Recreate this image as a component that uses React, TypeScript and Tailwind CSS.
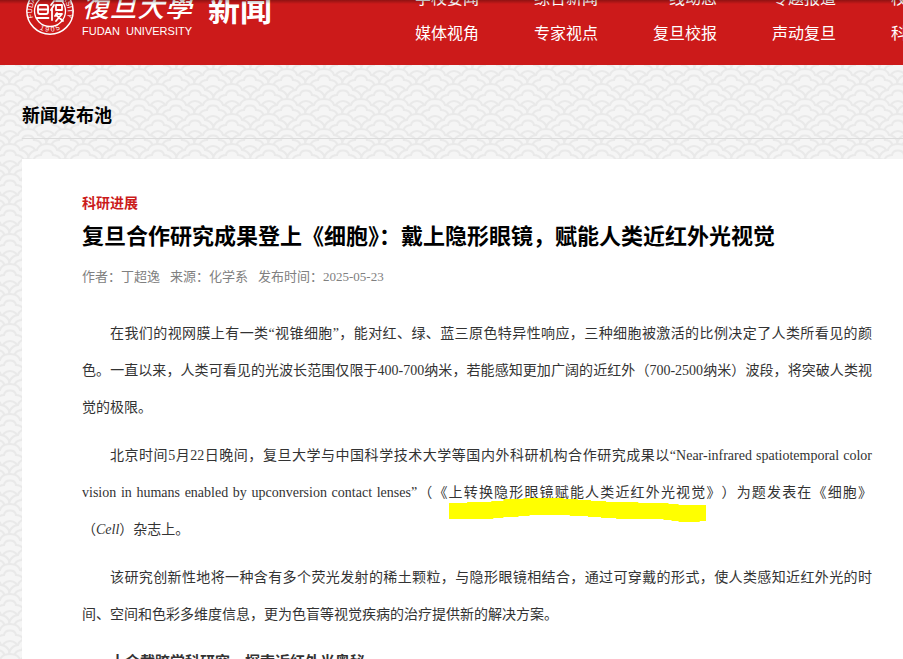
const navRows = [
  ["学校要闻", "综合新闻", "一线动态", "专题报道", "校园生活"],
  ["媒体视角", "专家视点", "复旦校报", "声动复旦", "科研进展"],
];

const meta = ["作者：丁超逸", "来源：化学系", "发布时间：2025-05-23"];

function Cloud({ x, y }: { x: number; y: number }) {
  return (
    <g transform={`translate(${x} ${y})`} fill="#f5f5f5" stroke="#e9e9e9" strokeWidth="2">
      <path d="M-19 20C-21 9 -17 3 -10 2C-8 -6 8 -6 10 2C17 3 21 9 19 20z" />
      <path d="M-14 20C-15 11 -12 7 -6 7C-5 1 5 1 6 7C12 7 15 11 14 20z" />
      <path d="M-8 22C-9 10 9 10 8 22z" />
    </g>
  );
}

function WavePattern() {
  // rows run top to bottom so that each one covers the foot of the row above
  const rows = [-1, 0, 1, 2].map((row) =>
    (row % 2 ? [0, 37] : [-18, 19, 56]).map((x) => <Cloud key={`${row}${x}`} x={x} y={row * 15} />)
  );
  return (
    <svg className="absolute inset-0 h-full w-full" aria-hidden="true">
      <defs>
        <pattern id="waves" x="28" y="-7" width="37" height="30" patternUnits="userSpaceOnUse">
          <rect width="37" height="30" fill="#f5f5f5" />
          {rows}
        </pattern>
      </defs>
      <rect width="100%" height="100%" fill="url(#waves)" />
    </svg>
  );
}

function Seal() {
  return (
    <svg className="h-12 w-12 shrink-0" viewBox="0 0 48 48" fill="none" stroke="#fff" aria-hidden="true">
      <defs>
        <path id="ringTop" d="M8 33A18 18 0 1 1 40 33" />
        <path id="ringBottom" d="M6 35A21.5 21.5 0 0 0 42 35" />
      </defs>
      <circle cx="24" cy="24" r="23.2" strokeWidth="1.5" />
      <circle cx="24" cy="24" r="15.5" strokeWidth="1.3" />
      <g fill="#fff" stroke="none" fontFamily="Liberation Sans, sans-serif" fontSize="7">
        <text>
          <textPath href="#ringTop" startOffset="50%" textAnchor="middle">FUDAN UNIVERSITY</textPath>
        </text>
        <text>
          <textPath href="#ringBottom" startOffset="50%" textAnchor="middle">1 9 0 5</textPath>
        </text>
      </g>
      <g strokeWidth="1.8" strokeLinecap="round" strokeLinejoin="round">
        <rect x="12" y="18" width="10" height="9" rx="2" />
        <path d="M12 22.5h10M10.5 31h12" />
        <path d="M28 14l-3 4M28 18l-3 5M26 22v11M30 14h7M30 18h6v5h-6zM31 26l-2 3M30 27h6l-6 7M30 28l7 6" />
      </g>
    </svg>
  );
}

function Header() {
  return (
    <header className="relative flex h-[65px] shrink-0 items-start overflow-hidden bg-[#cc1a1a] pl-[26px] text-white">
      <a href="#" className="-mt-[13px] flex shrink-0">
        <Seal />
        <span className="ml-2 flex w-[110px] flex-col">
          <span className="flex justify-between font-['Noto_Sans_CJK_TC',sans-serif] text-[27px] leading-[38px] font-medium italic">
            <span>復</span>
            <span>旦</span>
            <span>大</span>
            <span>學</span>
          </span>
          <span className="flex justify-between font-['Liberation_Sans',sans-serif] text-[11px] leading-3">
            <span>FUDAN</span>
            <span>UNIVERSITY</span>
          </span>
        </span>
        <span className="ml-4 text-[32px] leading-10 font-bold">新闻</span>
      </a>
      <nav className="-mt-5 ml-[143px] shrink-0">
        {navRows.map((row, i) => (
          <ul key={i} className="flex gap-[55px]">
            {row.map((item) => (
              <li key={item}>
                <a href="#" className="block text-base leading-[35px]">{item}</a>
              </li>
            ))}
          </ul>
        ))}
      </nav>
      <div className="absolute inset-x-0 top-0 h-1 bg-linear-to-b from-black/30 to-transparent" />
    </header>
  );
}

function Marker({ children }: { children: string }) {
  return (
    <span className="relative">
      {children}
      <svg
        className="absolute top-[13px] left-0 h-6 w-full"
        viewBox="0 0 256 24"
        preserveAspectRatio="none"
        aria-hidden="true"
      >
        <path
          fill="#ffff00"
          d="M0 5h18V4h24V3h12V1h20V0h40v1h14v1h13v1h15v1h32v1h30v1h10v1h28v16h-7v1h-21v-1h-7v-1h-8v-1h-47v-1h-15v-1h-13v-1h-18v-1H80v1H69v1H54v1H44v1H0z"
        />
      </svg>
    </span>
  );
}

export default function App() {
  return (
    <div
      lang="zh-CN"
      className="flex h-screen flex-col overflow-hidden bg-[#f5f5f5] font-['Noto_Sans_CJK_SC',sans-serif]"
    >
      <Header />
      <div className="relative flex-1 pl-[22px]">
        <WavePattern />
        <main className="relative">
          <h2 className="mb-5 border-b border-[#dcdcdc] pt-[31px] pb-1.5 text-lg leading-9 font-bold text-black">
            新闻发布池
          </h2>
          <article className="bg-white pt-[33px] pr-[31px] pb-10 pl-[60px]">
            <p className="text-sm leading-5 font-bold text-[#cb1b1b]">科研进展</p>
            <h1 className="mt-0.5 text-[22px] leading-10 font-bold text-black">
              复旦合作研究成果登上《细胞》：戴上隐形眼镜，赋能人类近红外光视觉
            </h1>
            <div className="mt-[13px] flex gap-[10px] font-['Liberation_Serif','Noto_Sans_CJK_SC',serif] text-[13px] leading-5 text-[#808080]">
              {meta.map((item) => (
                <span key={item}>{item}</span>
              ))}
            </div>
            <div className="mt-7 space-y-[11px] text-justify indent-7 font-['Liberation_Serif','Noto_Sans_CJK_SC',serif] text-sm leading-[37px] text-[#333] [text-spacing-trim:space-all]">
              <p>
                在我们的视网膜上有一类“视锥细胞”，能对红、绿、蓝三原色特异性响应，三种细胞被激活的比例决定了人类所看见的颜色。一直以来，人类可看见的光波长范围仅限于400-700纳米，若能感知更加广阔的近红外（700-2500纳米）波段，将突破人类视觉的极限。
              </p>
              <p>
                北京时间5月22日晚间，复旦大学与中国科学技术大学等国内外科研机构合作研究成果以“Near-infrared spatiotemporal color vision in humans enabled by upconversion contact lenses”（《
                <Marker>上转换隐形眼镜赋能人类近红外光视觉</Marker>
                》）为题发表在《细胞》（<em>Cell</em>）杂志上。
              </p>
              <p>
                该研究创新性地将一种含有多个荧光发射的稀土颗粒，与隐形眼镜相结合，通过可穿戴的形式，使人类感知近红外光的时间、空间和色彩多维度信息，更为色盲等视觉疾病的治疗提供新的解决方案。
              </p>
              <h3 className="text-[15px] font-bold">十余载跨学科研究，探索近红外光奥秘</h3>
            </div>
          </article>
        </main>
      </div>
    </div>
  );
}
